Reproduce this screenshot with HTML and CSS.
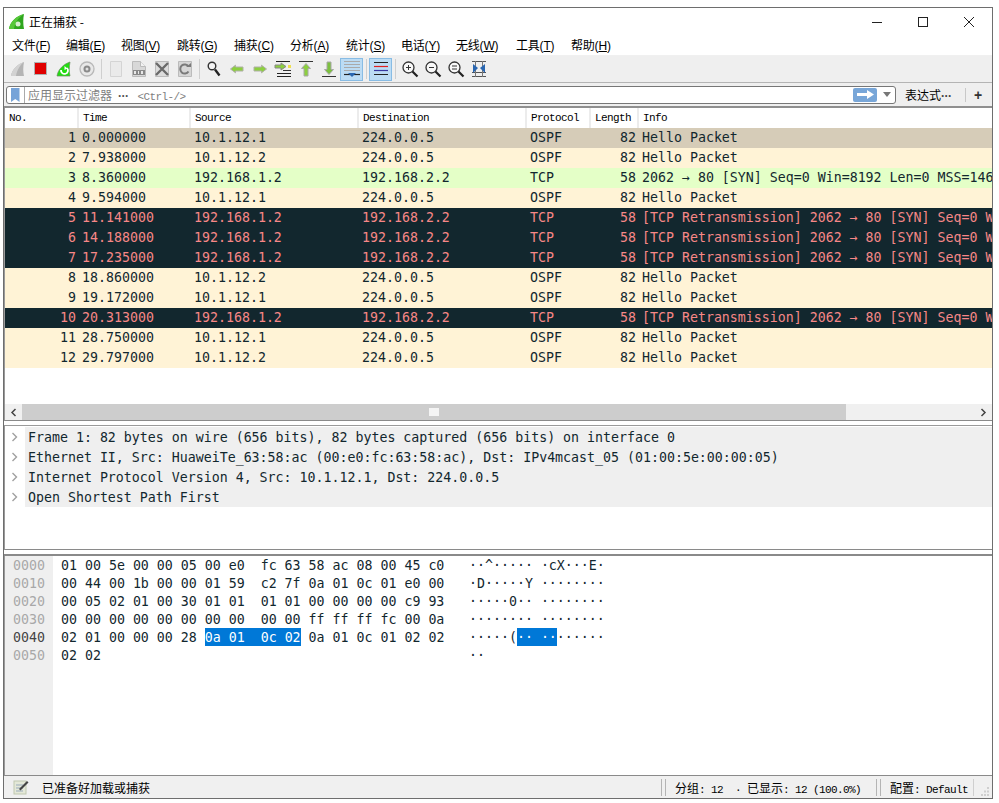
FILE: index.html
```html
<!DOCTYPE html>
<html lang="zh">
<head>
<meta charset="utf-8">
<title>正在捕获</title>
<link rel="stylesheet" href="styles.css">
</head>
<body>
<div class="window">
  <div class="titlebar">
    <svg class="appicon" width="18" height="18" viewBox="0 0 18 18"><path d="M1 16C2 9 8 3 16 1c-1 5-1 10 0 15z" fill="#2fa61f"/><path d="M1 16C2 9 8 3 16 1c-5 3-9 8-10 15z" fill="#57c83a"/><circle cx="10" cy="11" r="2.5" fill="#d8efd0"/></svg>
    <span class="title">正在捕获 -</span>
    <div class="winbtns">
      <svg width="46" height="20" viewBox="0 0 46 20"><path d="M18 10.5h10" stroke="#222" fill="none"/></svg>
      <svg width="46" height="20" viewBox="0 0 46 20"><rect x="18.5" y="5.5" width="9" height="9" stroke="#222" fill="none"/></svg>
      <svg width="46" height="20" viewBox="0 0 46 20"><path d="M18 5l10 10M28 5L18 15" stroke="#222" fill="none"/></svg>
    </div>
  </div>
  <nav class="menubar">
    <span class="menu m1">文件(<u>F</u>)</span>
    <span class="menu m2">编辑(<u>E</u>)</span>
    <span class="menu m3">视图(<u>V</u>)</span>
    <span class="menu m4">跳转(<u>G</u>)</span>
    <span class="menu m5">捕获(<u>C</u>)</span>
    <span class="menu m6">分析(<u>A</u>)</span>
    <span class="menu m7">统计(<u>S</u>)</span>
    <span class="menu m8">电话(<u>Y</u>)</span>
    <span class="menu m9">无线(<u>W</u>)</span>
    <span class="menu m10">工具(<u>T</u>)</span>
    <span class="menu m11">帮助(<u>H</u>)</span>
  </nav>
  <div class="toolbar">
    <span class="tool"><svg width="18" height="18" viewBox="0 0 18 18"><path d="M2 16C3 9 9 4 15 2c-1 5-1 10 0 14z" fill="#b4b4b4"/><path d="M2 16C3 9 9 4 15 2c-4 3-7 8-8 14z" fill="#d2d2d2"/></svg></span>
    <span class="tool"><svg width="18" height="18" viewBox="0 0 18 18"><rect x="2.500" y="2.500" width="12" height="12" fill="#e00000" stroke="#b0b0b0"/></svg></span>
    <span class="tool"><svg width="18" height="18" viewBox="0 0 18 18"><path d="M2 16C3 9 9 4 15 2c-1 5-1 10 0 14z" fill="#22dd11" stroke="#6c8a60" stroke-width=".7"/><path d="M6 10a3.500 3.500 0 1 0 6-2" stroke="#fff" stroke-width="1.800" fill="none"/><path d="M9.500 6l3 2.500-3 1.500z" fill="#fff"/></svg></span>
    <span class="tool"><svg width="18" height="18" viewBox="0 0 18 18"><circle cx="9" cy="9" r="7" fill="#e8e8e8" stroke="#b8b8b8" stroke-width="1.300"/><circle cx="9" cy="9" r="3.500" fill="#8a8a8a"/><circle cx="9" cy="9" r="1.500" fill="#e0e0e0"/></svg></span>
    <span class="sep"></span>
    <span class="tool"><svg width="18" height="18" viewBox="0 0 18 18"><path d="M3.500 1.500h11v15h-11z" fill="#eaeaea" stroke="#d4d4d4"/></svg></span>
    <span class="tool"><svg width="18" height="18" viewBox="0 0 18 18"><path d="M2.500 1.500h8l5 5v10h-13z" fill="#d8d8d8" stroke="#bbb"/><path d="M10.500 1.500v5h5" fill="#f2f2f2" stroke="#bbb"/><rect x="3" y="10" width="12" height="5" fill="#888"/><path d="M4 11h2v3H4zM8 11h1v3H8zM11 11h2v3h-2z" fill="#e8e8e8"/></svg></span>
    <span class="tool"><svg width="18" height="18" viewBox="0 0 18 18"><path d="M2.500 1.500h13v15h-13z" fill="#dcdcdc" stroke="#bbb"/><path d="M3 3l12 12M15 3L3 15" stroke="#6a6a6a" stroke-width="2.400"/></svg></span>
    <span class="tool"><svg width="18" height="18" viewBox="0 0 18 18"><path d="M2.500 1.500h13v15h-13z" fill="#d6d6d6" stroke="#bbb"/><path d="M12.500 11.500a4.500 4.500 0 1 1 0-5" stroke="#7a7a7a" stroke-width="2" fill="none"/><path d="M10 7h5V3z" fill="#7a7a7a"/></svg></span>
    <span class="sep"></span>
    <span class="tool"><svg width="18" height="18" viewBox="0 0 18 18"><circle cx="7" cy="6" r="3.800" fill="#f4f4f4" stroke="#333" stroke-width="1.400"/><path d="M10 9.500l4.500 6" stroke="#222" stroke-width="2.400"/></svg></span>
    <span class="tool"><svg width="18" height="18" viewBox="0 0 18 18"><path d="M2.500 9l5-3.800V7h7.500v4H7.500v1.800z" fill="#8ccf3f" stroke="#b0b0a8"/></svg></span>
    <span class="tool"><svg width="18" height="18" viewBox="0 0 18 18"><path d="M15.500 9l-5-3.800V7H3v4h7.500v1.800z" fill="#8ccf3f" stroke="#b0b0a8"/></svg></span>
    <span class="tool"><svg width="18" height="18" viewBox="0 0 18 18"><path d="M2 1.500h14M3 13.500h14M3 16.500h14" stroke="#222"/><path d="M12 6.500L7 3v2H1v3h6v2z" fill="#8ccf3f" stroke="#888"/><path d="M9 10.500h8" stroke="#333"/><rect x="14" y="5" width="3" height="3" fill="#f0e050"/></svg></span>
    <span class="tool"><svg width="18" height="18" viewBox="0 0 18 18"><path d="M2 1.500h14" stroke="#333"/><path d="M9 3.500l4.500 5H11v7.500H7V8.500H4.500z" fill="#8ccf3f" stroke="#a8a8a8"/></svg></span>
    <span class="tool"><svg width="18" height="18" viewBox="0 0 18 18"><path d="M2 16.500h14" stroke="#333"/><path d="M9 14.500l4.500-5H11V2H7v7.500H4.500z" fill="#7cc03f" stroke="#a8a8a8"/></svg></span>
    <span class="tool on"><svg width="18" height="18" viewBox="0 0 18 18"><path d="M1 1.500h16M1 4.500h16M1 7.500h16M1 10.500h16" stroke="#aaa"/><path d="M1 14.500h16" stroke="#222" stroke-width="1.200"/><path d="M5 13h8l-4 4z" fill="#2a66b0"/></svg></span>
    <span class="sep"></span>
    <span class="tool on"><svg width="18" height="18" viewBox="0 0 18 18"><path d="M2 2.500h14M2 14.500h14" stroke="#222"/><path d="M2 6.500h14" stroke="#e02020" stroke-width="1.200"/><path d="M2 10.500h14" stroke="#3838a0" stroke-width="1.200"/></svg></span>
    <span class="sep"></span>
    <span class="tool"><svg width="18" height="18" viewBox="0 0 18 18"><circle cx="7.500" cy="7.500" r="5.500" fill="#f8f8f8" stroke="#333" stroke-width="1.300"/><path d="M5 7.500h5M7.500 5v5" stroke="#333"/><path d="M11.500 11.500l5 5" stroke="#222" stroke-width="2.200"/></svg></span>
    <span class="tool"><svg width="18" height="18" viewBox="0 0 18 18"><circle cx="7.500" cy="7.500" r="5.500" fill="#f8f8f8" stroke="#333" stroke-width="1.300"/><path d="M5 7.500h5" stroke="#333"/><path d="M11.500 11.500l5 5" stroke="#222" stroke-width="2.200"/></svg></span>
    <span class="tool"><svg width="18" height="18" viewBox="0 0 18 18"><circle cx="7.500" cy="7.500" r="5.500" fill="#f8f8f8" stroke="#333" stroke-width="1.300"/><path d="M5 6h5M5 9h5" stroke="#333"/><path d="M11.500 11.500l5 5" stroke="#222" stroke-width="2.200"/></svg></span>
    <span class="tool"><svg width="18" height="18" viewBox="0 0 18 18"><path d="M2 1.500h14M2 16.500h14M2 12.500h14" stroke="#555"/><path d="M5.500 1v16M12.500 1v16" stroke="#777"/><path d="M8 8L3 4v9zM10 8l5-4v9z" fill="#2a66b0"/></svg></span>
  </div>
  <div class="filterbar">
    <div class="filterbox">
      <svg class="bookmark" width="9" height="14" viewBox="0 0 9 14"><path d="M0 0h8.500v14L4.250 11 0 14z" fill="#76a3d8"/></svg>
      <span class="filterhint">应用显示过滤器<span class="dots">···</span><span class="hintkey">&lt;Ctrl-/&gt;</span></span>
      <span class="applybtn"><svg width="17" height="9" viewBox="0 0 17 9"><path d="M0 3h10V0l7 4.500L10 9V6H0z" fill="#fff"/></svg></span>
      <svg class="dropdown" width="8" height="5" viewBox="0 0 8 5"><path d="M0 0h8L4 5z" fill="#777"/></svg>
    </div>
    <span class="exprbtn">表达式<span class="dots2">···</span></span>
    <span class="fsep"></span>
    <span class="plus">+</span>
  </div>
  <section class="packets">
    <div class="prow phead"><span>No.</span><span>Time</span><span>Source</span><span>Destination</span><span>Protocol</span><span>Length</span><span>Info</span></div>
    <div class="prow sel"><span class="no">1</span><span>0.000000</span><span>10.1.12.1</span><span>224.0.0.5</span><span>OSPF</span><span class="len">82</span><span>Hello Packet</span></div>
    <div class="prow tan"><span class="no">2</span><span>7.938000</span><span>10.1.12.2</span><span>224.0.0.5</span><span>OSPF</span><span class="len">82</span><span>Hello Packet</span></div>
    <div class="prow grn"><span class="no">3</span><span>8.360000</span><span>192.168.1.2</span><span>192.168.2.2</span><span>TCP</span><span class="len">58</span><span>2062 → 80 [SYN] Seq=0 Win=8192 Len=0 MSS=146</span></div>
    <div class="prow tan"><span class="no">4</span><span>9.594000</span><span>10.1.12.1</span><span>224.0.0.5</span><span>OSPF</span><span class="len">82</span><span>Hello Packet</span></div>
    <div class="prow bad"><span class="no">5</span><span>11.141000</span><span>192.168.1.2</span><span>192.168.2.2</span><span>TCP</span><span class="len">58</span><span>[TCP Retransmission] 2062 → 80 [SYN] Seq=0 W</span></div>
    <div class="prow bad"><span class="no">6</span><span>14.188000</span><span>192.168.1.2</span><span>192.168.2.2</span><span>TCP</span><span class="len">58</span><span>[TCP Retransmission] 2062 → 80 [SYN] Seq=0 W</span></div>
    <div class="prow bad"><span class="no">7</span><span>17.235000</span><span>192.168.1.2</span><span>192.168.2.2</span><span>TCP</span><span class="len">58</span><span>[TCP Retransmission] 2062 → 80 [SYN] Seq=0 W</span></div>
    <div class="prow tan"><span class="no">8</span><span>18.860000</span><span>10.1.12.2</span><span>224.0.0.5</span><span>OSPF</span><span class="len">82</span><span>Hello Packet</span></div>
    <div class="prow tan"><span class="no">9</span><span>19.172000</span><span>10.1.12.1</span><span>224.0.0.5</span><span>OSPF</span><span class="len">82</span><span>Hello Packet</span></div>
    <div class="prow bad"><span class="no">10</span><span>20.313000</span><span>192.168.1.2</span><span>192.168.2.2</span><span>TCP</span><span class="len">58</span><span>[TCP Retransmission] 2062 → 80 [SYN] Seq=0 W</span></div>
    <div class="prow tan"><span class="no">11</span><span>28.750000</span><span>10.1.12.1</span><span>224.0.0.5</span><span>OSPF</span><span class="len">82</span><span>Hello Packet</span></div>
    <div class="prow tan"><span class="no">12</span><span>29.797000</span><span>10.1.12.2</span><span>224.0.0.5</span><span>OSPF</span><span class="len">82</span><span>Hello Packet</span></div>
    <div class="pspacer"></div>
    <div class="hscroll">
      <span class="sarrow"><svg width="7" height="9" viewBox="0 0 7 9"><path d="M5.500 1L2 4.500 5.500 8" stroke="#444" stroke-width="1.500" fill="none"/></svg></span>
      <span class="sthumb"><i class="sgrip"></i></span>
      <span class="strack"></span>
      <span class="sarrow"><svg width="7" height="9" viewBox="0 0 7 9"><path d="M1.500 1L5 4.500 1.500 8" stroke="#444" stroke-width="1.500" fill="none"/></svg></span>
    </div>
  </section>
  <div class="split"></div>
  <section class="details">
    <div class="drow"><svg class="chev" width="7" height="10" viewBox="0 0 7 10"><path d="M1.500 1L5.500 5 1.500 9" stroke="#a0a0a0" stroke-width="1.400" fill="none"/></svg><span class="dtext">Frame 1: 82 bytes on wire (656 bits), 82 bytes captured (656 bits) on interface 0</span></div>
    <div class="drow"><svg class="chev" width="7" height="10" viewBox="0 0 7 10"><path d="M1.500 1L5.500 5 1.500 9" stroke="#a0a0a0" stroke-width="1.400" fill="none"/></svg><span class="dtext">Ethernet II, Src: HuaweiTe_63:58:ac (00:e0:fc:63:58:ac), Dst: IPv4mcast_05 (01:00:5e:00:00:05)</span></div>
    <div class="drow"><svg class="chev" width="7" height="10" viewBox="0 0 7 10"><path d="M1.500 1L5.500 5 1.500 9" stroke="#a0a0a0" stroke-width="1.400" fill="none"/></svg><span class="dtext">Internet Protocol Version 4, Src: 10.1.12.1, Dst: 224.0.0.5</span></div>
    <div class="drow"><svg class="chev" width="7" height="10" viewBox="0 0 7 10"><path d="M1.500 1L5.500 5 1.500 9" stroke="#a0a0a0" stroke-width="1.400" fill="none"/></svg><span class="dtext">Open Shortest Path First</span></div>
  </section>
  <div class="split2"></div>
  <section class="hex">
    <div class="hexgutter">
      <div>0000</div><div>0010</div><div>0020</div><div>0030</div><div class="active">0040</div><div>0050</div>
    </div>
    <div class="hexbytes">
      <div>01 00 5e 00 00 05 00 e0  fc 63 58 ac 08 00 45 c0</div>
      <div>00 44 00 1b 00 00 01 59  c2 7f 0a 01 0c 01 e0 00</div>
      <div>00 05 02 01 00 30 01 01  01 01 00 00 00 00 c9 93</div>
      <div>00 00 00 00 00 00 00 00  00 00 ff ff ff fc 00 0a</div>
      <div>02 01 00 00 00 28 <mark>0a 01  0c 02</mark> 0a 01 0c 01 02 02</div>
      <div>02 02</div>
    </div>
    <div class="hexascii">
      <div>··^····· ·cX···E·</div>
      <div>·D·····Y ········</div>
      <div>·····0·· ········</div>
      <div>········ ········</div>
      <div>·····(<mark>·· ··</mark>······</div>
      <div>··</div>
    </div>
  </section>
  <footer class="statusbar">
    <svg class="sticon" width="16" height="16" viewBox="0 0 16 16"><rect x="1" y="2" width="12" height="13" fill="#e4e8d8" stroke="#c0c8b0"/><path d="M3 6h7M3 9h7M3 12h7" stroke="#9ab"/><path d="M6 10l8-8 1.500 1.500-8 8z" fill="#444"/></svg>
    <span class="ready">已准备好加载或捕获</span>
    <span class="stsep"></span>
    <span class="stat">分组<span class="lat">: 12  · </span>已显示<span class="lat">: 12 (100.0%)</span></span>
    <span class="stsep"></span>
    <span class="prof">配置<span class="lat">: Default</span></span>
    <span class="stline"></span>
    <svg class="grip" width="12" height="12" viewBox="0 0 12 12"><path d="M9 1h2v2H9zM6 4.500h2v2H6zM9 4.500h2v2H9zM3 8h2v2H3zM6 8h2v2H6zM9 8h2v2H9z" fill="#cfcfcf"/></svg>
  </footer>
</div>
</body>
</html>
```

FILE: styles.css
```css
* { box-sizing: border-box; }
html, body { margin: 0; height: 100%; }
body {
  background: #fff;
  padding: 7px 6px 4px 3px;
  font-family: "Noto Sans CJK SC", "Liberation Sans", sans-serif;
  font-size: 12px;
  color: #000;
  overflow: hidden;
}
.window {
  width: 990px;
  height: 792px;
  border: 1px solid #6e6e6e;
  display: flex;
  flex-direction: column;
  background: #fff;
  overflow: hidden;
}
.titlebar {
  height: 27px;
  flex: none;
  display: flex;
  align-items: center;
  padding-left: 4px;
}
.appicon { margin-right: 3px; }
.title { font-size: 12px; }
.winbtns { margin-left: auto; display: flex; }
.menubar {
  height: 21px;
  flex: none;
  display: flex;
  align-items: center;
  padding: 0 0 2px 8px;
  border-bottom: 1px solid #f0f0f0;
  font-size: 12px;
  font-family: "Liberation Sans", "Noto Sans CJK SC", sans-serif;
}
.menu { letter-spacing: -0.2px; }
.m1 { width: 54px; }
.m2 { width: 55px; }
.m3 { width: 56px; }
.m4 { width: 57px; }
.m5 { width: 56px; }
.m6 { width: 56px; }
.m7 { width: 55px; }
.m8 { width: 55px; }
.m9 { width: 60px; }
.m10 { width: 55px; }
.toolbar {
  height: 27px;
  flex: none;
  background: #efefef;
  border-bottom: 1px solid #b4b4b4;
  display: flex;
  align-items: center;
  padding-left: 2px;
}
.tool {
  width: 23px;
  height: 23px;
  display: flex;
  align-items: center;
  justify-content: center;
  border: 1px solid transparent;
}
.tool.on { background: #bcdcf4; border-color: #88bce4; }
.sep { width: 1px; height: 20px; margin: 0 2.5px; background: #cfcfcf; }
.filterbar {
  height: 25px;
  flex: none;
  background: #efefef;
  display: flex;
  align-items: center;
  padding-left: 2px;
  border-bottom: 2px solid #8f8f8f;
}
.filterbox {
  width: 890px;
  height: 18px;
  background: #fff;
  border: 1px solid #777;
  border-radius: 3px;
  display: flex;
  align-items: center;
  padding-left: 4px;
}
.bookmark { flex: none; }
.filterhint {
  margin-left: 4px;
  padding-left: 3px;
  border-left: 1px solid #aaa;
  height: 16px;
  line-height: 16px;
  color: #7f7f7f;
  font-size: 12px;
  flex: 1;
}
.dots { font-family: "Liberation Sans", sans-serif; font-weight: 700; letter-spacing: -0.5px; margin: 0 9px 0 6px; color: #555; }
.dots2 { font-family: "Liberation Sans", sans-serif; font-weight: 700; letter-spacing: -0.5px; color: #444; }
.hintkey { font-family: "Liberation Mono", monospace; font-size: 11px; letter-spacing: -0.6px; }
.applybtn {
  width: 24px;
  height: 14px;
  background: #78a6d8;
  border-radius: 2px;
  display: flex;
  align-items: center;
  justify-content: center;
}
.dropdown { margin: 0 4px 0 6px; }
.exprbtn { margin-left: 9px; font-size: 12px; width: 60px; }
.fsep { width: 1px; height: 14px; background: #c8c8c8; }
.plus { margin-left: 8px; font-weight: 700; font-size: 14px; font-family: "Liberation Sans", sans-serif; color: #333; }
.packets {
  height: 313px;
  flex: none;
  display: flex;
  flex-direction: column;
  border-left: 1px solid #9a9a9a;
  border-bottom: 1px solid #8a8a8a;
}
.prow {
  height: 20px;
  flex: none;
  display: grid;
  grid-template-columns: 74px 112px 168px 168px 64px 48px 1fr;
  font-family: "DejaVu Sans Mono", monospace;
  font-size: 13.28px;
  line-height: 19px;
  white-space: pre;
  overflow: hidden;
  color: #12272e;
}
.prow span { padding-left: 3px; overflow: hidden; }
.prow .no, .prow .len { text-align: right; padding: 0 3px 0 0; }
.phead {
  background: #fff;
  font-family: "Liberation Mono", monospace;
  font-size: 11px;
  letter-spacing: -0.6px;
  line-height: 19px;
  color: #000;
}
.phead span { border-right: 2px solid #ececec; padding: 1px 0 0 4px; }
.phead span:last-child { border-right: 0; }
.sel { background: #d6ccb8; }
.tan { background: #fff3d6; }
.grn { background: #e4ffc7; }
.bad { background: #12272e; color: #f78787; }
.pspacer { flex: 1; }
.hscroll { height: 16px; flex: none; display: flex; background: #f0f0f0; }
.sarrow { width: 17px; display: flex; align-items: center; justify-content: center; background: #f0f0f0; }
.sthumb { width: 824px; background: #cdcdcd; display: flex; align-items: center; justify-content: center; }
.sgrip { width: 10px; height: 8px; background: #f4f4f4; }
.strack { flex: 1; }
.split { height: 5px; flex: none; background: #fff; border-bottom: 1px solid #9a9a9a; }
.details {
  height: 124px;
  flex: none;
  padding-top: 1px;
  border-left: 1px solid #9a9a9a;
  border-bottom: 1px solid #8a8a8a;
}
.drow { height: 20px; display: flex; align-items: center; }
.chev { margin-left: 6px; margin-right: 7px; flex: none; }
.dtext {
  flex: 1;
  height: 20px;
  padding: 1px 0 0 3px;
  background: #efefef;
  font-family: "DejaVu Sans Mono", monospace;
  font-size: 13.28px;
  line-height: 19px;
  color: #12272e;
  white-space: pre;
}
.split2 { height: 6px; flex: none; border-bottom: 2px solid #8a8a8a; }
.hex {
  flex: 1;
  display: flex;
  border-left: 1px solid #9a9a9a;
  border-bottom: 1px solid #8a8a8a;
  font-family: "DejaVu Sans Mono", monospace;
  font-size: 13.28px;
  color: #12272e;
}
.hex > div > div { height: 18px; line-height: 20px; }
.hexbytes div, .hexascii div { white-space: pre; }
.hexgutter { width: 48px; background: #efefef; padding-left: 8px; color: #a8a8a8; }
.hexgutter .active { color: #444; }
.hexbytes { padding-left: 8px; width: 416px; }
.hex mark {
  display: inline-block;
  height: 18px;
  vertical-align: top;
  background: #0078d7;
  color: #fff;
}
.hexascii { color: #12272e; }
.statusbar {
  height: 22px;
  flex: none;
  background: #f0f0f0;
  display: flex;
  align-items: center;
  padding-left: 9px;
  font-size: 12px;
}
.sticon { flex: none; }
.ready { margin-left: 13px; width: 619px; }
.stsep { width: 5px; height: 17px; border: solid #b4b4b4; border-width: 0 1px; }
.stat { width: 210px; padding-left: 9px; }
.prof { width: 92px; padding-left: 9px; }
.lat { font-family: "Liberation Mono", monospace; font-size: 11px; letter-spacing: -0.6px; white-space: pre; }
.stline { width: 1px; height: 17px; background: #cfcfcf; }
.grip { margin-left: auto; margin-right: 2px; align-self: flex-end; }
```
